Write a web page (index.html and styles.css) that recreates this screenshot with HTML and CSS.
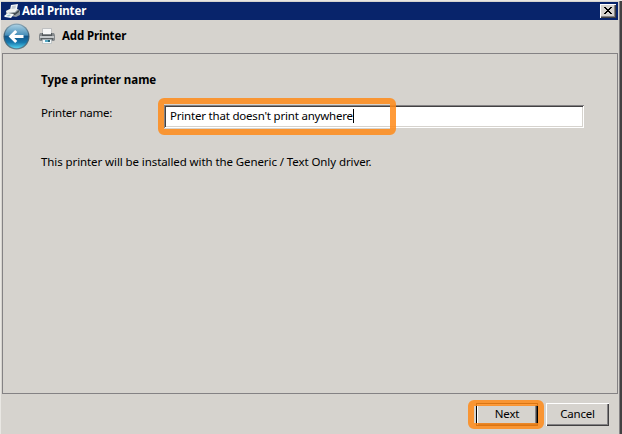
FILE: index.html
```
<!DOCTYPE html>
<html lang="en">
<head>
<meta charset="utf-8">
<title>Add Printer</title>
<link rel="stylesheet" href="styles.css">
</head>
<body>
<main class="window">
  <header class="titlebar">
    <svg class="title-icon" width="17" height="16" viewBox="0 0 17 16">
      <path d="M7 2l7-1-1 5-7 1z" fill="#f4f6f8"/>
      <path d="M8 3l4-.6-.6 3L7.500 6z" fill="#c3cbd3"/>
      <path d="M2 8l4-2h8l2 2v4l-4 2-10-2z" fill="#8f989f"/>
      <path d="M2 8l4-2h8l-3 3-8 1z" fill="#eef0ef"/>
      <path d="M4 10h7l4-3v2l-4 3H4z" fill="#40494e"/>
      <path d="M0 13l4-3 6 1-3 4-6-1z" fill="#f8fafb"/>
      <path d="M2 13l3-1.500 2 .5-2 1.500z" fill="#9cc5d0"/>
    </svg>
    <h1 class="title">Add Printer</h1>
    <button class="close" aria-label="Close"><svg width="8" height="7" viewBox="0 0 8 7" shape-rendering="crispEdges"><path d="M0 0h2v1h1v1h2V1h1V0h2v1H7v1H6v1H5v1h1v1h1v1h1v1H6V6H5V5H3v1H2v1H0V6h1V5h1V4h1V3H2V2H1V1H0z"/></svg></button>
  </header>
  <nav class="navbar">
    <svg class="back" width="27" height="27" viewBox="0 0 27 27">
      <defs>
        <linearGradient id="rim" x2="0" y2="1"><stop stop-color="#8ba8b8"/><stop offset=".5" stop-color="#35586e"/><stop offset="1" stop-color="#617f8c"/></linearGradient>
        <linearGradient id="blue" x2="0" y2="1"><stop stop-color="#a9cfe2"/><stop offset=".43" stop-color="#4a91bb"/><stop offset=".5" stop-color="#11588c"/><stop offset=".75" stop-color="#1678ad"/><stop offset="1" stop-color="#54d2ef"/></linearGradient>
      </defs>
      <circle cx="13.5" cy="13.5" r="13" fill="url(#rim)"/>
      <circle cx="13.5" cy="13.5" r="11.8" fill="url(#blue)"/>
      <path d="M20.5 13.5H8M13.2 8l-5.5 5.5 5.5 5.5" fill="none" stroke="#fff" stroke-width="3"/>
    </svg>
    <svg class="printer" width="16" height="16" viewBox="0 0 16 16">
      <path d="M3.500 .5h9V7h-9z" fill="#fafafa" stroke="#b4b6b7" stroke-width=".8"/>
      <path d="M1 5h14l1 2v5l-1 1H1l-1-1V7z" fill="#85898c"/>
      <path d="M4 1h8v5H4z" fill="#f6f6f6"/>
      <path d="M3 5h1v2h8V5h1v3H3z" fill="#53585b"/>
      <path d="M1 8h14v2H1z" fill="#c6c9cb"/>
      <path d="M2 10h12v2H2z" fill="#5c6164"/>
      <path d="M3.500 11.500h9v4h-9z" fill="#f4f9fa" stroke="#a4afb3" stroke-width=".6"/>
      <path d="M6 12h3v2H6z" fill="#55a8c4"/><path d="M9 12h2v2H9z" fill="#276579"/>
    </svg>
    <h2 class="heading">Add Printer</h2>
  </nav>
  <section class="page">
    <h3 class="prompt">Type a printer name</h3>
    <div class="field">
      <label class="label">Printer name:</label>
      <div class="entry">
        <div class="input"><span class="value">Printer that doesn't print anywhere</span><i class="caret"></i></div>
        <div class="mark mark-input"></div>
      </div>
    </div>
    <p class="note">This printer will be installed with the Generic / Text Only driver.</p>
  </section>
  <footer class="actions">
    <div class="next-wrap"><button class="button primary">Next</button><div class="mark mark-next"></div></div>
    <button class="button">Cancel</button>
  </footer>
</main>
</body>
</html>
```
FILE: styles.css
```
* { box-sizing: border-box; }
body { margin: 0; overflow: hidden; background: #d6d3ce; color: #000; font: 11.5px/16px "Noto Sans", sans-serif; }
h1, h2, h3, p { margin: 0; font-size: 11.5px; line-height: 16px; white-space: nowrap; }
svg { display: block; flex: none; }
.window { width: 622px; height: 434px; display: flex; flex-direction: column; padding: 2px 4px 0 1px; background: #d6d3ce; box-shadow: inset 1px 1px #e9e7e3, inset -2px 0 #424142, inset -3px 0 #848284; }
.titlebar { height: 18px; display: flex; align-items: center; padding: 0 2px 0 3px; background: #08246b; color: #fff; }
.title { margin-left: 1px; letter-spacing: -.14px; }
.close { display: flex; align-items: center; justify-content: center; width: 16px; height: 14px; margin-left: auto; padding: 0 1px 1px 0; border: 0; background: #d6d3ce; box-shadow: inset 1px 1px #fff, inset -1px -1px #424142, inset -2px -2px #848284; }
.navbar { height: 33px; display: flex; align-items: center; padding: 0 0 1px 2px; }
.printer { margin-left: 9px; }
.heading { margin-left: 7px; letter-spacing: -.14px; }
.page { height: 341px; margin: 0 0 0 1px; border: 1px solid #848284; padding: 18px 0 0 38px; }
.prompt { letter-spacing: -.03px; }
.field { display: flex; margin-top: 17px; }
.label { width: 123px; letter-spacing: -.22px; }
.entry { position: relative; width: 420px; height: 23px; }
.input { display: flex; align-items: center; height: 23px; padding: 0 0 1px 6px; background: #fff; box-shadow: inset 1px 1px #848284, inset -1px -1px #fff, inset 2px 2px #424142, inset -2px -2px #d6d3ce; white-space: nowrap; }
.value { letter-spacing: -.2px; }
.caret { width: 1px; height: 14px; background: #000; }
.mark { position: absolute; border-radius: 6px; border: 6px solid rgba(255, 138, 24, .85); pointer-events: none; }
.mark-input { left: -6px; top: -7px; width: 238px; height: 37px; }
.note { margin-top: 26px; letter-spacing: -.09px; }
.actions { display: flex; justify-content: flex-end; gap: 8px; padding: 9px 9px 0 0; }
.next-wrap { position: relative; }
.button { display: block; width: 63px; height: 23px; padding: 0 0 2px; border: 0; background: #d6d3ce; font: inherit; letter-spacing: -.2px; color: #000; box-shadow: inset 1px 1px #fff, inset -1px -1px #424142, inset -2px -2px #848284; }
.primary { width: 62px; box-shadow: inset 0 0 0 1px #000, inset 2px 2px #fff, inset -2px -2px #424142, inset -3px -3px #848284; }
.mark-next { left: -8px; top: -3px; width: 76px; height: 29px; }
```
